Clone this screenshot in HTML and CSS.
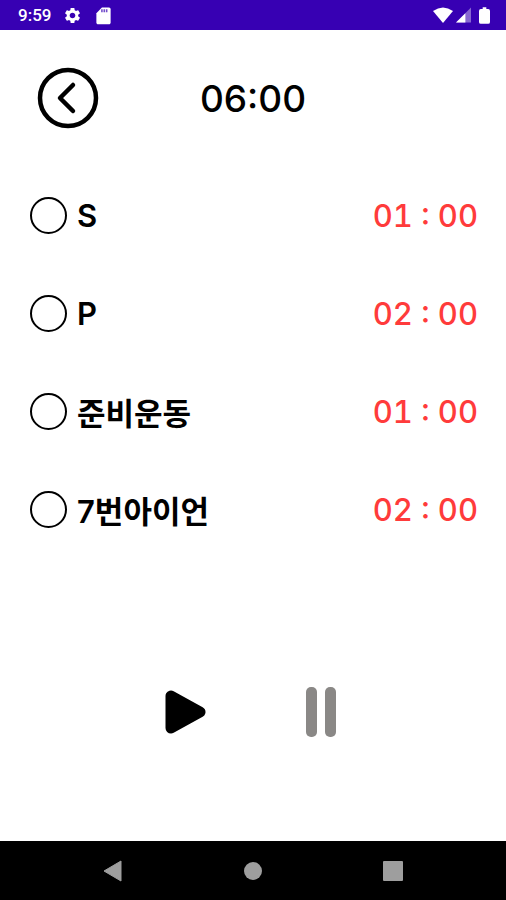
FILE: index.html
```
<!DOCTYPE html>
<html lang="ko">
<head>
    <meta charset="UTF-8">
    <meta name="viewport" content="width=device-width, initial-scale=1.0">
    <title>운동 타이머</title>
    <link rel="stylesheet" href="styles.css">
</head>
<body>
    <!-- 상태 표시줄 -->
    <div class="status-bar">
        <span class="clock">9:59</span>
        <svg class="status-icon" viewBox="0 0 24 24" fill="#fff">
            <path d="M19.14 12.94c.04-.3.06-.61.06-.94 0-.32-.02-.64-.07-.94l2.03-1.58c.18-.14.23-.41.12-.61l-1.92-3.32c-.12-.22-.37-.29-.59-.22l-2.39.96c-.5-.38-1.03-.7-1.62-.94l-.36-2.54c-.04-.24-.24-.41-.48-.41h-3.84c-.24 0-.43.17-.47.41l-.36 2.54c-.59.24-1.13.57-1.62.94l-2.39-.96c-.22-.08-.47 0-.59.22L2.74 8.87c-.12.21-.08.47.12.61l2.03 1.58c-.05.3-.09.63-.09.94s.02.64.07.94l-2.03 1.58c-.18.14-.23.41-.12.61l1.92 3.32c.12.22.37.29.59.22l2.39-.96c.5.38 1.03.7 1.62.94l.36 2.54c.05.24.24.41.48.41h3.84c.24 0 .44-.17.47-.41l.36-2.54c.59-.24 1.13-.56 1.62-.94l2.39.96c.22.08.47 0 .59-.22l1.92-3.32c.12-.22.07-.47-.12-.61l-2.01-1.58zM12 15.6c-1.98 0-3.6-1.62-3.6-3.6s1.62-3.6 3.6-3.6 3.6 1.62 3.6 3.6-1.62 3.6-3.6 3.6z"/>
        </svg>
        <svg class="status-icon" viewBox="0 0 24 24" fill="#fff">
            <path d="M19 2h-9L3 9v12c0 1 1 2 2 2h14c1 0 2-1 2-2V4c0-1-1-2-2-2z"/>
            <path d="M9 4h2v4H9zM12 4h2v4h-2zM15 4h2v4h-2z" fill="#3700b3" fill-opacity=".7"/>
        </svg>
        <div class="status-right">
            <svg width="20" height="16" viewBox="0 0 20 16" fill="#fff">
                <path d="M0 4Q10-3 20 4L10 16z"/>
            </svg>
            <svg width="15" height="16" viewBox="0 0 16 16" fill="#fff">
                <path d="M16 0v16H0z" fill-opacity=".4"/>
                <path d="M10 6v10H0z"/>
            </svg>
            <svg width="11" height="17" viewBox="0 0 12 18" fill="#fff">
                <path d="M4 0h4v2h2q2 0 2 2v12q0 2-2 2H2q-2 0-2-2V4q0-2 2-2h2z"/>
            </svg>
        </div>
    </div>

    <header class="header">
        <button class="icon-button" type="button" aria-label="뒤로">
            <svg width="62" height="62" viewBox="0 0 62 62" fill="none" stroke="#000" stroke-width="4.500">
                <circle cx="31" cy="31" r="28"/>
                <path d="M36 18L23 31l13 13" stroke-linecap="round" stroke-linejoin="round"/>
            </svg>
        </button>
        <h1 class="total-time">06:00</h1>
    </header>

    <!-- 운동 목록 -->
    <ul class="routine">
        <li class="routine-item">
            <input type="checkbox" class="check" id="item1">
            <label class="name" for="item1">S</label>
            <span class="time">01 : 00</span>
        </li>
        <li class="routine-item">
            <input type="checkbox" class="check" id="item2">
            <label class="name" for="item2">P</label>
            <span class="time">02 : 00</span>
        </li>
        <li class="routine-item">
            <input type="checkbox" class="check" id="item3">
            <label class="name" for="item3">준비운동</label>
            <span class="time">01 : 00</span>
        </li>
        <li class="routine-item">
            <input type="checkbox" class="check" id="item4">
            <label class="name" for="item4">7번아이언</label>
            <span class="time">02 : 00</span>
        </li>
    </ul>

    <!-- 재생 / 일시정지 -->
    <div class="controls">
        <button class="icon-button" type="button" aria-label="재생">
            <svg width="42" height="50" viewBox="0 0 42 50">
                <path d="M6 9v32l29-16z" stroke="#000" stroke-width="11" stroke-linejoin="round"/>
            </svg>
        </button>
        <button class="icon-button" type="button" aria-label="일시정지">
            <svg width="32" height="50" viewBox="0 0 32 50" fill="#8a8886">
                <rect x="1" width="11" height="50" rx="5"/>
                <rect x="20" width="11" height="50" rx="5"/>
            </svg>
        </button>
    </div>

    <!-- 하단 내비게이션 -->
    <nav class="nav-bar">
        <button class="icon-button" type="button" aria-label="이전">
            <svg width="20" height="22" viewBox="0 0 20 22" fill="#9e9e9e"><path d="M18 1v20L1 11z" stroke="#9e9e9e" stroke-linejoin="round"/></svg>
        </button>
        <button class="icon-button" type="button" aria-label="홈">
            <svg width="20" height="20" viewBox="0 0 20 20" fill="#9e9e9e"><circle cx="10" cy="10" r="9"/></svg>
        </button>
        <button class="icon-button" type="button" aria-label="최근 앱">
            <svg width="20" height="20" viewBox="0 0 20 20" fill="#9e9e9e"><rect width="20" height="20" rx="1"/></svg>
        </button>
    </nav>
</body>
</html>
```
FILE: styles.css
```
* {
    margin: 0;
    padding: 0;
    box-sizing: border-box;
}

body {
    display: flex;
    flex-direction: column;
    min-height: 100vh;
    font-family: Inter, "Noto Sans CJK KR", sans-serif;
    color: #000;
    background: #fff;
}

svg {
    display: block;
}

.icon-button {
    border: none;
    background: none;
    cursor: pointer;
}

/* 상태 표시줄 */
.status-bar {
    display: flex;
    align-items: center;
    gap: 12px;
    height: 30px;
    padding: 0 16px 0 18px;
    background: #3700b3;
    color: #fff;
}

.clock {
    font-family: Roboto, sans-serif;
    font-size: 17px;
    font-weight: 500;
}

.status-icon {
    width: 19px;
    height: 19px;
}

.status-right {
    display: flex;
    align-items: center;
    gap: 3px;
    margin-left: auto;
}

.status-right svg:last-child {
    margin-left: 5px;
}

/* 상단 */
.header {
    display: grid;
    grid-template-columns: 1fr auto 1fr;
    align-items: center;
    height: 136px;
    padding: 0 37px;
}

.header .icon-button {
    justify-self: start;
}

.total-time {
    font-size: 37px;
    font-weight: 500;
}

/* 운동 목록 */
.routine {
    list-style: none;
    padding: 0 28px 0 30px;
}

.routine-item {
    display: flex;
    align-items: center;
    gap: 10px;
    height: 98px;
}

.check {
    appearance: none;
    width: 37px;
    height: 37px;
    border: 2px solid #000;
    border-radius: 50%;
}

.check:checked {
    background: #000;
}

.name {
    font-size: 31px;
    font-weight: 600;
}

.time {
    margin-left: auto;
    font-size: 31px;
    font-weight: 500;
    font-variant-numeric: tabular-nums;
    color: #ff3b3b;
}

/* 재생 버튼 */
.controls {
    flex: 1;
    display: flex;
    justify-content: center;
    align-items: center;
    gap: 98px;
    padding: 24px 4px 0 0;
}

/* 하단 내비게이션 */
.nav-bar {
    display: flex;
    justify-content: center;
    align-items: center;
    gap: 120px;
    height: 59px;
    background: #000;
}
```
